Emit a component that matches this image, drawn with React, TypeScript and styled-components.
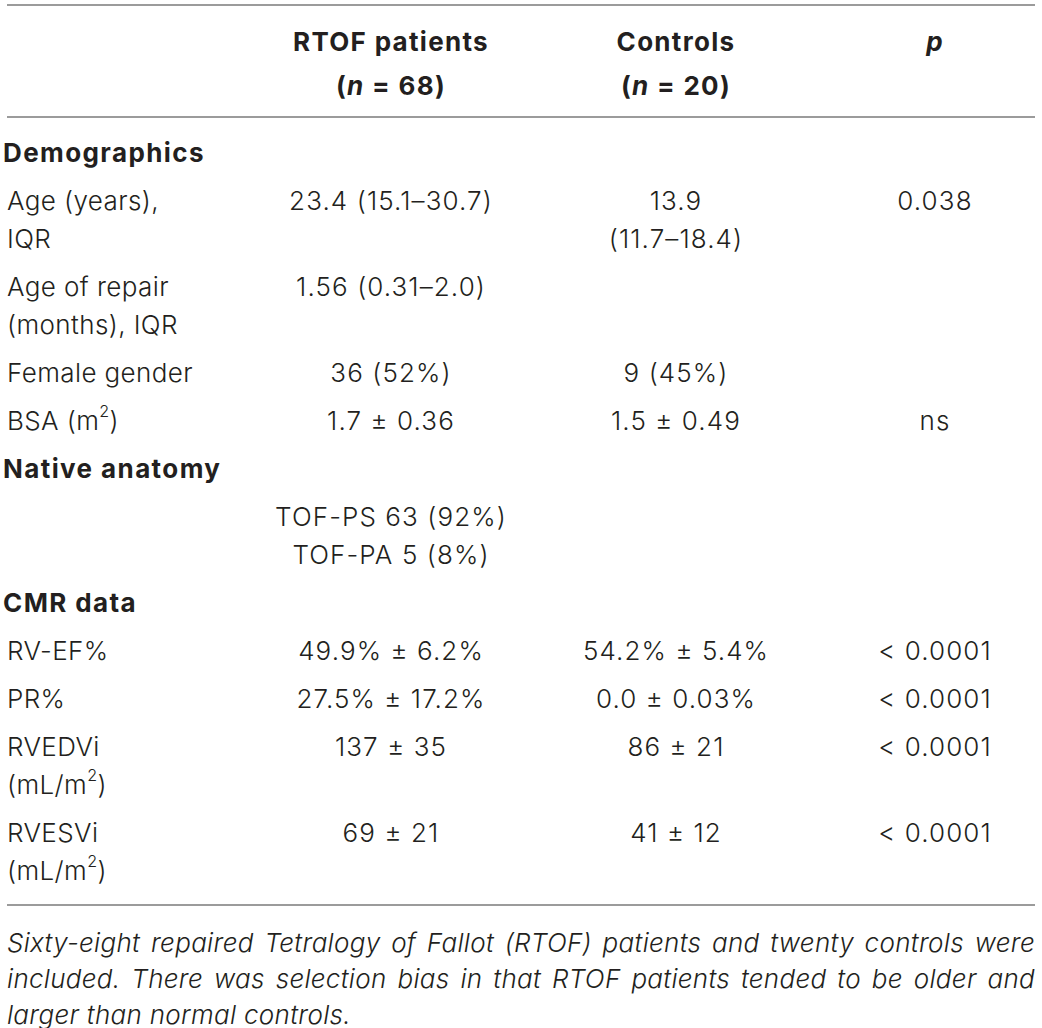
import React from 'react';
import styled, { createGlobalStyle } from 'styled-components';

const GlobalStyle = createGlobalStyle`
  html, body {
    margin: 0;
    padding: 0;
    background: #ffffff;
  }
  body {
    font-family: Inter, "Liberation Sans", Arial, sans-serif;
    color: #231f20;
  }
`;

const COLUMNS = '263px 256px 314px 204px';

const Page = styled.div`
  width: 1042px;
  padding-top: 4px;
`;

const Rule = styled.div`
  margin-left: 7px;
  width: 1028px;
  height: 2px;
  background-color: #9b9b9b;
`;

const HeaderRow = styled.div`
  display: grid;
  grid-template-columns: ${COLUMNS};
  align-items: start;
  padding: 14px 0 8px;
  line-height: 44px;
`;

const HeadCell = styled.div`
  text-align: center;
  font-size: 26px;
  font-weight: 700;
  letter-spacing: 1.3px;
  white-space: nowrap;
`;

const Body = styled.div`
  padding: 11px 0 9px;
`;

const Row = styled.div`
  display: grid;
  grid-template-columns: ${COLUMNS};
  align-items: start;
  padding: 5px 0;
  line-height: 38px;
  font-size: 26px;
  font-weight: 300;

  sup {
    font-size: 0.62em;
    line-height: 0;
    vertical-align: 0.8em;
  }
`;

const Section = styled.div`
  padding: 5px 0 5px 3px;
  line-height: 38px;
  font-size: 26px;
  font-weight: 700;
  letter-spacing: 1.4px;
`;

const Label = styled.div`
  padding-left: 7px;
  letter-spacing: 0.4px;
  white-space: nowrap;
`;

const Value = styled.div`
  text-align: center;
  letter-spacing: 1.1px;
  white-space: nowrap;
`;

const Caption = styled.div`
  margin: 19px 7px 0;
  width: 1028px;
  font-size: 26px;
  font-weight: 300;
  font-style: italic;
  letter-spacing: 0.3px;
  line-height: 36px;
`;

const CaptionLine = styled.span<{ $last?: boolean }>`
  display: block;
  white-space: nowrap;
  text-align: ${(p) => (p.$last ? 'left' : 'justify')};
  text-align-last: ${(p) => (p.$last ? 'left' : 'justify')};
`;

type RowData = {
  label: React.ReactNode;
  rtof?: React.ReactNode;
  controls?: React.ReactNode;
  p?: React.ReactNode;
};

type Group = { title: string; rows: RowData[] };

const m2 = (
  <>
    m<sup>2</sup>
  </>
);

const groups: Group[] = [
  {
    title: 'Demographics',
    rows: [
      {
        label: (
          <>
            Age (years),
            <br />
            IQR
          </>
        ),
        rtof: '23.4 (15.1–30.7)',
        controls: (
          <>
            13.9
            <br />
            (11.7–18.4)
          </>
        ),
        p: '0.038',
      },
      {
        label: (
          <>
            Age of repair
            <br />
            (months), IQR
          </>
        ),
        rtof: '1.56 (0.31–2.0)',
      },
      { label: 'Female gender', rtof: '36 (52%)', controls: '9 (45%)' },
      { label: <>BSA ({m2})</>, rtof: '1.7 ± 0.36', controls: '1.5 ± 0.49', p: 'ns' },
    ],
  },
  {
    title: 'Native anatomy',
    rows: [
      {
        label: '',
        rtof: (
          <>
            TOF-PS 63 (92%)
            <br />
            TOF-PA 5 (8%)
          </>
        ),
      },
    ],
  },
  {
    title: 'CMR data',
    rows: [
      { label: 'RV-EF%', rtof: '49.9% ± 6.2%', controls: '54.2% ± 5.4%', p: '< 0.0001' },
      { label: 'PR%', rtof: '27.5% ± 17.2%', controls: '0.0 ± 0.03%', p: '< 0.0001' },
      {
        label: (
          <>
            RVEDVi
            <br />
            (mL/{m2})
          </>
        ),
        rtof: '137 ± 35',
        controls: '86 ± 21',
        p: '< 0.0001',
      },
      {
        label: (
          <>
            RVESVi
            <br />
            (mL/{m2})
          </>
        ),
        rtof: '69 ± 21',
        controls: '41 ± 12',
        p: '< 0.0001',
      },
    ],
  },
];

const captionLines = [
  'Sixty-eight repaired Tetralogy of Fallot (RTOF) patients and twenty controls were',
  'included. There was selection bias in that RTOF patients tended to be older and',
  'larger than normal controls.',
];

const App: React.FC = () => {
  return (
    <Page>
      <GlobalStyle />
      <Rule />
      <HeaderRow>
        <HeadCell />
        <HeadCell>
          RTOF patients
          <br />(<i>n</i> = 68)
        </HeadCell>
        <HeadCell>
          Controls
          <br />(<i>n</i> = 20)
        </HeadCell>
        <HeadCell>
          <i>p</i>
        </HeadCell>
      </HeaderRow>
      <Rule />
      <Body>
        {groups.map((group) => (
          <React.Fragment key={group.title}>
            <Section>{group.title}</Section>
            {group.rows.map((row, i) => (
              <Row key={i}>
                <Label>{row.label}</Label>
                <Value>{row.rtof}</Value>
                <Value>{row.controls}</Value>
                <Value>{row.p}</Value>
              </Row>
            ))}
          </React.Fragment>
        ))}
      </Body>
      <Rule />
      <Caption>
        {captionLines.map((line, i) => (
          <CaptionLine key={i} $last={i === captionLines.length - 1}>
            {line}
          </CaptionLine>
        ))}
      </Caption>
    </Page>
  );
};

export default App;
